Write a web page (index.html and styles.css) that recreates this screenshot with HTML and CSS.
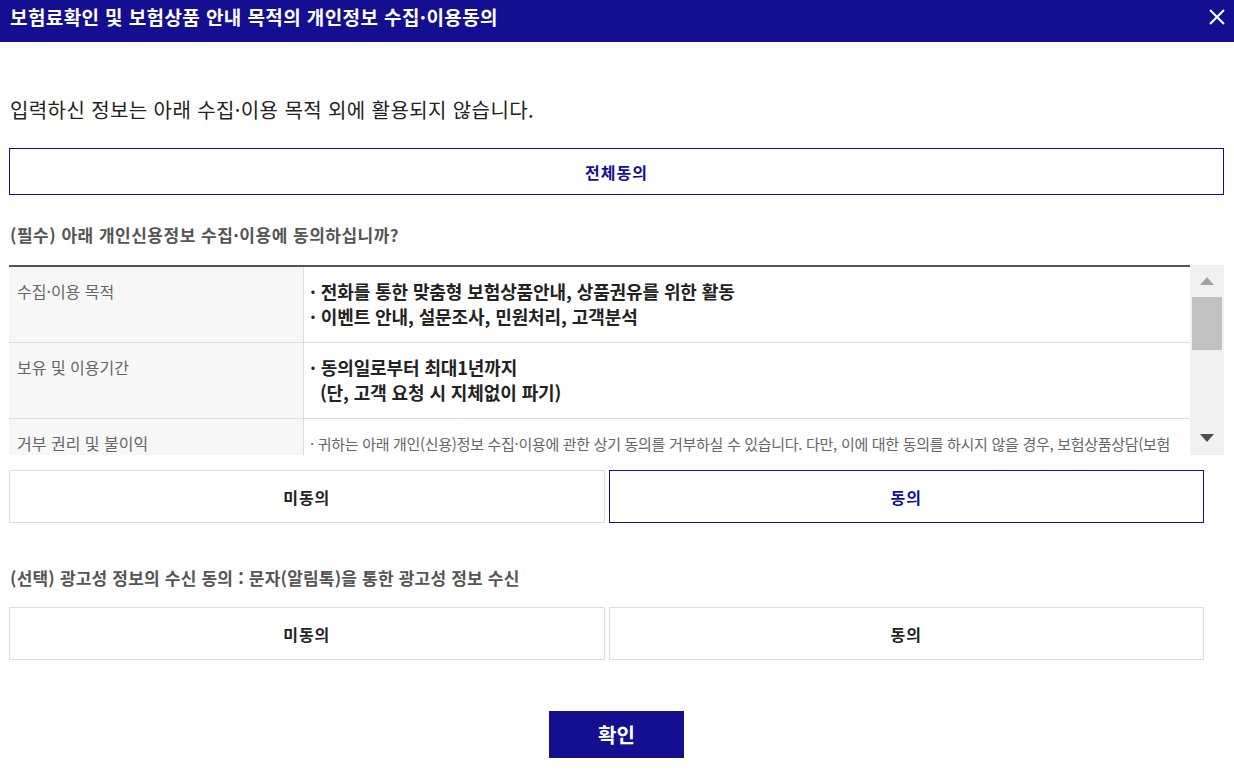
FILE: index.html
```html
<!DOCTYPE html>
<html lang="ko">

<head>
    <meta charset="UTF-8">
    <title>개인정보 수집·이용동의</title>
    <link rel="stylesheet" href="styles.css">
</head>

<body>
    <div class="popup">
        <div class="popup-header">
            <h1>보험료확인 및 보험상품 안내 목적의 개인정보 수집·이용동의</h1>
            <button class="close-btn" type="button">
                <svg width="18" height="18" viewBox="0 0 18 18">
                    <path d="M2 2 L16 16 M16 2 L2 16" stroke="#fff" stroke-width="2" fill="none" />
                </svg>
            </button>
        </div>
        <div class="popup-body">
            <p class="intro">입력하신 정보는 아래 수집·이용 목적 외에 활용되지 않습니다.</p>
            <button class="all-agree" type="button">전체동의</button>

            <h3 class="section-title">(필수) 아래 개인신용정보 수집·이용에 동의하십니까?</h3>
            <div class="terms-box">
                <div class="terms-scroll">
                    <div class="terms-row">
                        <div class="terms-label">수집·이용 목적</div>
                        <div class="terms-content strong">
                            · 전화를 통한 맞춤형 보험상품안내, 상품권유를 위한 활동<br>
                            · 이벤트 안내, 설문조사, 민원처리, 고객분석
                        </div>
                    </div>
                    <div class="terms-row">
                        <div class="terms-label">보유 및 이용기간</div>
                        <div class="terms-content strong">
                            · 동의일로부터 최대1년까지<br>
                            &nbsp;&nbsp;(단, 고객 요청 시 지체없이 파기)
                        </div>
                    </div>
                    <div class="terms-row">
                        <div class="terms-label">거부 권리 및 불이익</div>
                        <div class="terms-content small">
                            · 귀하는 아래 개인(신용)정보 수집·이용에 관한 상기 동의를 거부하실 수 있습니다. 다만, 이에 대한 동의를 하시지 않을 경우, 보험상품상담(보험 상품안내) 서비스를 받으실 수 없습니다.
                        </div>
                    </div>
                </div>
                <div class="scrollbar">
                    <div class="arrow-up"></div>
                    <div class="thumb"></div>
                    <div class="track"></div>
                    <div class="arrow-down"></div>
                </div>
            </div>
            <div class="choice-row first">
                <button class="choice" type="button">미동의</button>
                <button class="choice selected" type="button">동의</button>
            </div>

            <h3 class="section-title second">(선택) 광고성 정보의 수신 동의 : 문자(알림톡)을 통한 광고성 정보 수신</h3>
            <div class="choice-row">
                <button class="choice" type="button">미동의</button>
                <button class="choice" type="button">동의</button>
            </div>

            <div class="confirm-wrap">
                <button class="confirm" type="button">확인</button>
            </div>
        </div>
    </div>
</body>

</html>
```

FILE: styles.css
```css
body {
    margin: 0;
    background-color: #fff;
    font-family: "Noto Sans CJK KR", "Noto Sans", sans-serif;
    color: #222;
}

button {
    font-family: inherit;
    cursor: pointer;
}

.popup-header {
    height: 42px;
    background-color: #140f91;
    display: flex;
    align-items: center;
    justify-content: space-between;
    padding: 0 8px 0 10px;
}

.popup-header h1 {
    margin: 0;
    color: #fff;
    font-size: 19px;
    font-weight: 700;
    letter-spacing: 0.4px;
    line-height: 34px;
    margin-top: -8px;
}

.close-btn {
    background: none;
    border: none;
    padding: 0;
    width: 18px;
    height: 18px;
    margin-top: -8px;
}

.popup-body {
    padding: 54px 10px 0 9px;
}

.intro {
    margin: 0 0 0 1px;
    font-size: 20px;
    line-height: 28px;
    letter-spacing: 0.4px;
    color: #222;
}

.all-agree {
    display: block;
    width: 100%;
    height: 47px;
    margin-top: 24px;
    background-color: #fff;
    border: 1px solid #140f91;
    color: #140f91;
    font-size: 16px;
    font-weight: 700;
    letter-spacing: 1px;
}

.section-title {
    margin: 28px 0 0 1px;
    font-size: 17px;
    line-height: 24px;
    font-weight: 700;
    color: #555;
    letter-spacing: 0.5px;
}

.section-title.second {
    margin-top: 43px;
    letter-spacing: 0.2px;
}

.terms-box {
    display: flex;
    height: 190px;
    margin-top: 18px;
}

.terms-scroll {
    flex-grow: 1;
    border-top: 2px solid #555;
    overflow: hidden;
}

.terms-row {
    display: flex;
    border-bottom: 1px solid #ddd;
}

.terms-label {
    width: 286px;
    flex-shrink: 0;
    background-color: #f7f7f7;
    border-right: 1px solid #ddd;
    padding: 12px 0 13px 8px;
    font-size: 16px;
    line-height: 25px;
    color: #666;
}

.terms-content {
    padding: 12px 4px 13px 6px;
    line-height: 25px;
}

.terms-content.strong {
    font-size: 18px;
    font-weight: 700;
    color: #222;
    letter-spacing: -0.1px;
}

.terms-content.small {
    font-size: 15px;
    color: #666;
    letter-spacing: -0.3px;
}

.scrollbar {
    width: 34px;
    flex-shrink: 0;
    background-color: #f1f1f1;
    display: flex;
    flex-direction: column;
    align-items: center;
}

.arrow-up {
    margin-top: 12px;
    width: 0;
    height: 0;
    border-left: 7px solid transparent;
    border-right: 7px solid transparent;
    border-bottom: 8px solid #a3a3a3;
}

.thumb {
    margin-top: 12px;
    width: 30px;
    height: 53px;
    background-color: #c1c1c1;
}

.track {
    flex-grow: 1;
}

.arrow-down {
    margin-bottom: 13px;
    width: 0;
    height: 0;
    border-left: 7px solid transparent;
    border-right: 7px solid transparent;
    border-top: 8px solid #505050;
}

.choice-row {
    display: flex;
    gap: 4px;
    width: 1195px;
    margin-top: 17px;
}

.choice-row.first {
    margin-top: 15px;
}

.choice {
    flex: 1;
    height: 53px;
    background-color: #fff;
    border: 1px solid #ddd;
    font-size: 16px;
    font-weight: 700;
    color: #222;
    letter-spacing: 1px;
}

.choice.selected {
    border-color: #140f91;
    color: #140f91;
}

.confirm-wrap {
    display: flex;
    justify-content: center;
    margin-top: 51px;
}

.confirm {
    width: 135px;
    height: 47px;
    background-color: #140f91;
    border: none;
    color: #fff;
    font-size: 20px;
    font-weight: 700;
}
```
